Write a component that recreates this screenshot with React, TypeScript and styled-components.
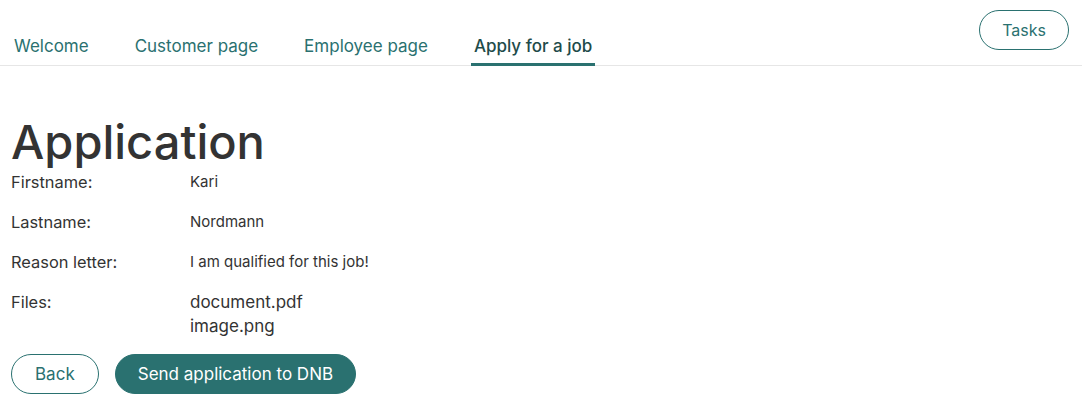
import React from "react";
import styled, { createGlobalStyle } from "styled-components";

const Global = createGlobalStyle`
  body { margin: 0; background: #fff; font-family: "Inter", "Open Sans", sans-serif; color: #333; }
  * { box-sizing: border-box; }
`;

const teal = "#2a7170";

const Page = styled.div`
  display: flex;
  flex-direction: column;
`;

const Header = styled.header`
  display: flex;
  align-items: flex-end;
  justify-content: space-between;
  border-bottom: 1px solid #e6e6e6;
  padding: 0 13px 0 11px;
  height: 66px;
`;

const Tabs = styled.nav`
  display: flex;
  gap: 40px;
`;

const Tab = styled.a<{ $active?: boolean }>`
  display: block;
  padding: 0 3px 5px;
  font-size: 17px;
  line-height: 24px;
  color: ${(p) => (p.$active ? "#1e4b4a" : teal)};
  font-weight: ${(p) => (p.$active ? 500 : 400)};
  border-bottom: 3px solid ${(p) => (p.$active ? teal : "transparent")};
  margin-bottom: -1px;
  text-decoration: none;
  cursor: pointer;
`;

const TasksButton = styled.button`
  align-self: flex-start;
  margin-top: 10px;
  height: 40px;
  padding: 0 22px;
  border-radius: 20px;
  border: 1px solid ${teal};
  background: #fff;
  color: ${teal};
  font-family: inherit;
  font-size: 16px;
`;

const Main = styled.main`
  padding: 48px 11px 0;
  display: flex;
  flex-direction: column;
`;

const Title = styled.h1`
  margin: 0;
  font-size: 47px;
  line-height: 56px;
  font-weight: 500;
  color: #333;
`;

const Fields = styled.dl`
  margin: 0;
  display: grid;
  grid-template-columns: 179px 1fr;
  row-gap: 16px;
`;

const Label = styled.dt`
  font-size: 16.4px;
  line-height: 24px;
  margin: 0;
`;

const Value = styled.dd<{ $big?: boolean }>`
  margin: 0;
  font-size: ${(p) => (p.$big ? "17px" : "15px")};
  line-height: 24px;
  display: flex;
  flex-direction: column;
`;

const Actions = styled.div`
  display: flex;
  gap: 16px;
  margin-top: 16px;
`;

const Button = styled.button<{ $primary?: boolean }>`
  height: 40px;
  padding: 0 ${(p) => (p.$primary ? "22px" : "23px")};
  border-radius: 20px;
  border: 1px solid ${teal};
  background: ${(p) => (p.$primary ? teal : "#fff")};
  color: ${(p) => (p.$primary ? "#fff" : teal)};
  font-family: inherit;
  font-size: 17px;
`;

export default function App() {
  return (
    <Page>
      <Global />
      <Header>
        <Tabs>
          <Tab>Welcome</Tab>
          <Tab>Customer page</Tab>
          <Tab>Employee page</Tab>
          <Tab $active>Apply for a job</Tab>
        </Tabs>
        <TasksButton>Tasks</TasksButton>
      </Header>
      <Main>
        <Title>Application</Title>
        <Fields>
          <Label>Firstname:</Label>
          <Value>Kari</Value>
          <Label>Lastname:</Label>
          <Value>Nordmann</Value>
          <Label>Reason letter:</Label>
          <Value>I am qualified for this job!</Value>
          <Label>Files:</Label>
          <Value $big>
            <span>document.pdf</span>
            <span>image.png</span>
          </Value>
        </Fields>
        <Actions>
          <Button>Back</Button>
          <Button $primary>Send application to DNB</Button>
        </Actions>
      </Main>
    </Page>
  );
}
